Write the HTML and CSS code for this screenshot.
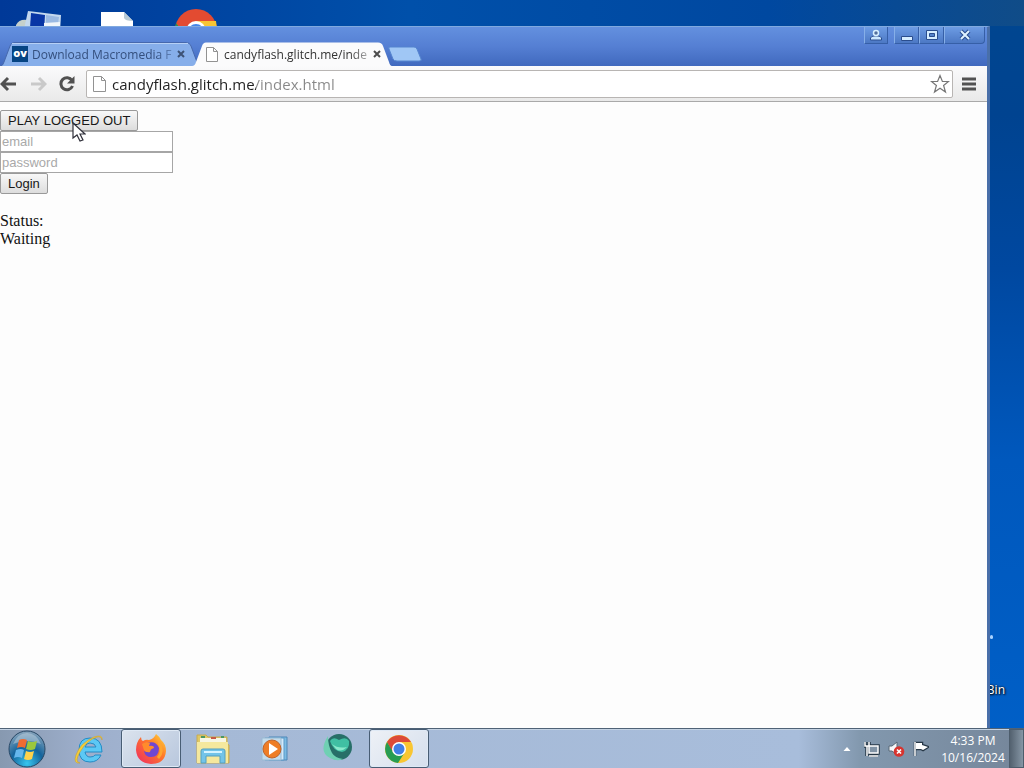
FILE: index.html
```html
<!DOCTYPE html>
<html lang="en">
<head>
<meta charset="utf-8">
<title>candyflash.glitch.me/index.html</title>
<link rel="stylesheet" href="styles.css">
</head>
<body>
<div class="desktop">
  <div class="shortcuts">
    <svg class="shortcut" width="48" height="36" viewBox="0 0 48 36" aria-hidden="true">
      <path d="M1 25q3-6 11-5l2 8H1z" fill="#c5d0cb"/>
      <path d="M13 11l33 4-1 18-36-4z" fill="#c3d8ee"/>
      <path d="M16 13l14 2-1 16-14-3z" fill="#0835a5"/>
      <path d="M31 15l13 2-1 7-12-1z" fill="#9ab9e2"/>
      <path d="M29 23l16-1v6l-16 1z" fill="#f0f5fa"/>
    </svg>
    <svg class="shortcut" width="34" height="36" viewBox="0 0 34 36" aria-hidden="true">
      <path d="M0 12h23l9 9v15H0z" fill="#fff"/><path d="M23 12v6q1 3 9 3z" fill="#b9cbd6"/>
    </svg>
    <svg class="shortcut" width="44" height="36" viewBox="0 0 44 36" aria-hidden="true">
      <circle cx="23" cy="30" r="21" fill="#e34b31"/><path d="M3 23l10 13H1z" fill="#24984f"/>
      <path d="M24 21h19l2 15H24z" fill="#f8c534"/><circle cx="23" cy="31" r="10" fill="#fff"/><circle cx="23" cy="32" r="8" fill="#4686e8"/>
    </svg>
  </div>
  <span class="bin-label">Recycle Bin</span>
  <span class="spark"></span>

  <section class="window">
    <header class="titlebar">
      <nav class="tabs">
        <div class="tab">
          <svg class="tab-shape" viewBox="0 0 200 24" preserveAspectRatio="none" aria-hidden="true"><path d="M0 24q3 0 4-4L10 4q1-3.500 4-3.500h172q4 0 5 3.500l6 16q1 4 3 4" fill="#86aeea" stroke="#4668ad"/><path d="M12 1.500h176" stroke="#b6d0f5"/></svg>
          <span class="favicon-ov">ov</span>
          <a class="tab-title" href="#">Download Macromedia F</a>
          <button class="tab-close" aria-label="Close tab"><svg width="8" height="8" viewBox="0 0 8 8"><path d="M1 1l6 6M7 1L1 7" stroke="#3d5276" stroke-width="2"/></svg></button>
        </div>
        <div class="tab active">
          <svg class="tab-shape" viewBox="0 0 200 24" preserveAspectRatio="none" aria-hidden="true"><path d="M0 24q3 0 4-4L10 4q1-3.500 4-3.500h172q4 0 5 3.500l6 16q1 4 3 4" fill="#fbfbfc"/></svg>
          <svg class="favicon" width="12" height="15" viewBox="0 0 12 15" aria-hidden="true"><path d="M.5.5h7l4 4v10H.5zM7.500.5v4h4" fill="#fff" stroke="#929292"/></svg>
          <a class="tab-title" href="#">candyflash.glitch.me/inde</a>
          <button class="tab-close" aria-label="Close tab"><svg width="8" height="8" viewBox="0 0 8 8"><path d="M1 1l6 6M7 1L1 7" stroke="#4c4c4c" stroke-width="2"/></svg></button>
        </div>
        <button class="new-tab" aria-label="New tab"><svg width="34" height="16" viewBox="0 0 34 16"><path d="M2 1h24q2 0 3 2l4 10q1 2-2 2H9q-3 0-4-2L1 3q-1-2 1-2z" fill="#a0c7f5" stroke="#5585cf"/></svg></button>
      </nav>
      <div class="controls">
        <button class="control user" aria-label="User"><svg width="12" height="12" viewBox="0 0 12 12"><path d="M.5 11v-2Q1.500 7 4 7h4q2.500 0 3.500 2v2z" fill="#cce8ff" stroke="#2a4d8d"/><circle cx="6" cy="4" r="2.500" fill="#536f9e" stroke="#d8f0ff" stroke-width="1.500"/></svg></button>
        <button class="control" aria-label="Minimize"><svg width="12" height="12" viewBox="0 0 12 12"><path d="M.5 7.500h11v4H.5z" fill="#d6edff" stroke="#2a4d8d"/></svg></button>
        <button class="control" aria-label="Maximize"><svg width="12" height="12" viewBox="0 0 12 12"><path d="M.5 1.500h11v9H.5z" fill="#d6edff" stroke="#2a4d8d"/><path d="M3.500 4.500h5v3h-5z" fill="#5584cb" stroke="#2a4d8d"/></svg></button>
        <button class="control close" aria-label="Close"><svg width="12" height="12" viewBox="0 0 12 12"><path d="M2 2l8 8M10 2l-8 8" stroke="#2a4d8d" stroke-width="4"/><path d="M2 2l8 8M10 2l-8 8" stroke="#e0f3ff" stroke-width="2"/></svg></button>
      </div>
    </header>

    <div class="toolbar">
      <button class="tool" aria-label="Back"><svg width="18" height="16" viewBox="0 0 18 16"><path d="M8 2L2 8l6 6M2 8h14" fill="none" stroke="#515151" stroke-width="3"/></svg></button>
      <button class="tool" aria-label="Forward"><svg width="18" height="16" viewBox="0 0 18 16"><path d="M10 2l6 6-6 6M16 8H2" fill="none" stroke="#c9c9c9" stroke-width="3"/></svg></button>
      <button class="tool" aria-label="Reload"><svg width="18" height="16" viewBox="0 0 18 16"><path d="M14 4.500A6 6 0 1 0 14.500 10" fill="none" stroke="#515151" stroke-width="3"/><path d="M16.500 0v7.500H9z" fill="#515151"/></svg></button>
      <div class="omnibox">
        <svg width="13" height="16" viewBox="0 0 13 16" aria-hidden="true"><path d="M.5.500h8l4 4v11H.5zM8.500.5v4h4" fill="#fff" stroke="#929292"/></svg>
        <input class="url" type="text" aria-label="Address" value="candyflash.glitch.me/index.html">
        <button class="star" aria-label="Bookmark this page"><svg width="20" height="20" viewBox="0 0 20 20"><path d="M10 1.500l2.400 6h6.100l-4.900 4 1.900 6.500-5.500-3.800L4.500 18l1.900-6.500-4.900-4h6.100z" fill="#fff" stroke="#777" stroke-width="1.200"/></svg></button>
      </div>
      <button class="menu" aria-label="Menu"><svg width="14" height="14" viewBox="0 0 14 14"><path d="M0 2h14M0 7h14M0 12h14" stroke="#525252" stroke-width="3"/></svg></button>
    </div>

    <main class="page">
      <form class="login">
        <button class="btn" type="button">PLAY LOGGED OUT</button>
        <input class="field" type="email" placeholder="email" aria-label="email">
        <input class="field" type="password" placeholder="password" aria-label="password">
        <button class="btn" type="button">Login</button>
      </form>
      <div class="status">Status:<br>Waiting</div>
    </main>
  </section>

  <footer class="taskbar">
    <button class="start" aria-label="Start"><svg width="38" height="38" viewBox="0 0 38 38">
      <defs><radialGradient id="orb" cx=".5" cy=".9" r=".9"><stop offset="0" stop-color="#37c6ef"/><stop offset=".5" stop-color="#14649c"/><stop offset="1" stop-color="#8ba6bd"/></radialGradient></defs>
      <circle cx="19" cy="19" r="18" fill="url(#orb)" stroke="#284866"/>
      <path d="M5 14Q10 3 19 3t14 11q-14-6-28 0z" fill="#c4d3df" opacity=".5"/>
      <path d="M11 10q4-2 8 0l-2 8q-4-2-8 0z" fill="#ee6b32"/><path d="M20 11q4 2 9 0l-2 8q-4 2-9 0z" fill="#9bc73d"/>
      <path d="M8 20q5-2 8 0l-2 8q-4-2-8 0z" fill="#65b7ed"/><path d="M18 21q4 2 8 0l-2 8q-4 2-8 0z" fill="#ffd24b"/>
    </svg></button>
    <div class="apps">
      <button class="app" aria-label="Internet Explorer"><svg width="32" height="32" viewBox="0 0 32 32"><path d="M29 19H12q1 5 5 5 4 0 5-2h6q-3 7-11 7Q6 29 6 17 6 5 17 5q12 0 12 14zM12 14h11q-1-4-6-4-4 0-5 4z" fill="#5cc8f4" stroke="#238bc5"/><path d="M29 7q1-6-8-3Q7 10 3 22q-3 9 4 8-6-1 0-11Q14 7 24 4q4-1 5 3z" fill="#f5ce38" stroke="#cda12f" stroke-width=".6"/></svg></button>
      <button class="app open" aria-label="Firefox"><svg width="32" height="32" viewBox="0 0 32 32"><defs><linearGradient id="fox" x1="1" y1="0" x2="0" y2="1"><stop stop-color="#ffe23e"/><stop offset=".4" stop-color="#ff7b27"/><stop offset="1" stop-color="#ef2865"/></linearGradient></defs><path d="M21 1q4 3 5 6 5 4 5 11-1 13-15 13Q2 30 1 17 1 9 6 4q0 3 2 4 3-2 6-1 5-1 7-6z" fill="url(#fox)"/><path d="M12 10q9-3 12 5 0 9-8 9-6 0-7-6 3 2 7-1-5-1-4-7z" fill="#7147d1"/><path d="M7 11q4-3 8-1l-1 3q5-1 5 2-4 1-4 4-4 1-6-2z" fill="#ff8b2c"/><path d="M24 9q5 10-1 16" fill="none" stroke="#ffa52e" stroke-width="3"/></svg></button>
      <button class="app" aria-label="File Explorer"><svg width="34" height="32" viewBox="0 0 34 32"><path d="M1 5V2h9l2 2h19v7l2 1v18H1z" fill="#dfc965" stroke="#c7aa52"/><path d="M4 5h26v4H4z" fill="#f7f6e4"/><path d="M5 4h4M25 4h3" stroke="#4a9862" stroke-width="2"/><path d="M15 5h5" stroke="#c75b45" stroke-width="2"/><path d="M1 9h31v21H1z" fill="#f5e89d"/><path d="M5 30V18q0-2 2-2h20q2 0 2 2v12h-5v-7H10v7z" fill="#72c4e9" stroke="#549fbe"/><path d="M8 19h18" stroke="#d6f4ff" stroke-width="2"/></svg></button>
      <button class="app" aria-label="Media Player"><svg width="28" height="28" viewBox="0 0 28 28"><path d="M8 2h18v23H8z" fill="#7cbbe2" stroke="#4f87b8"/><path d="M4 3h19v22H4z" fill="#d3eafa" stroke="#5a99c7"/><path d="M1 3h19v22H1z" fill="#c3dcec" stroke="#9abad3"/><circle cx="11" cy="14" r="9" fill="#ee7d25" stroke="#bd632b"/><path d="M8 8l9 6-9 6z" fill="#fff"/></svg></button>
      <button class="app" aria-label="Globe"><svg width="34" height="32" viewBox="0 0 34 32"><circle cx="19" cy="14" r="13" fill="#276f68"/><path d="M8 3Q-2 19 10 25q7 4 13 1-8-1-11-6Q8 13 8 3z" fill="#6fd0b3"/><path d="M10 8q3-5 9-1 7-4 10 1 1 9-7 11-9-1-12-11z" fill="#40bfa3"/><path d="M12 11q6 5 15 3-6 6-11 2z" fill="#8ae9cc"/></svg></button>
      <button class="app open current" aria-label="Chrome"><svg width="30" height="30" viewBox="0 0 30 30"><circle cx="15" cy="15" r="14" fill="#f9c632"/><path d="M3 8A14 14 0 0 1 27 8H15l-6 11z" fill="#dc4a38"/><path d="M3 8A14 14 0 0 0 14 29L21 18H9z" fill="#279c53"/><circle cx="15" cy="15" r="7" fill="#fff"/><circle cx="15" cy="15" r="5.500" fill="#417fe6"/></svg></button>
    </div>
    <div class="tray">
      <button class="tray-icon" aria-label="Show hidden icons"><svg width="8" height="6" viewBox="0 0 8 6"><path d="M4 1l3.500 4h-7z" fill="#fff"/></svg></button>
      <button class="tray-icon" aria-label="Network"><svg width="16" height="16" viewBox="0 0 16 16"><path d="M5 5h9v7H5zM5 15h9M1 1v4h4V1M3 5v10" fill="none" stroke="#263746" stroke-width="3.500"/><path d="M5 5h9v7H5z" fill="#8193a5"/><path d="M5 5h9v7H5zM5 15h9M1 1v4h4V1M3 5v10" fill="none" stroke="#fff" stroke-width="1.500"/></svg></button>
      <button class="tray-icon" aria-label="Volume muted"><svg width="17" height="16" viewBox="0 0 17 16"><path d="M1 5h3l5-4v13l-5-4H1z" fill="#f6f8fa" stroke="#596876"/><circle cx="11" cy="10.500" r="5.300" fill="#d7342f"/><path d="M9 8.500l4 4M13 8.500l-4 4" stroke="#fff" stroke-width="1.700"/></svg></button>
      <button class="tray-icon" aria-label="Action center"><svg width="16" height="16" viewBox="0 0 16 16"><path d="M2 1v14M3 2h6v2l6 2-5 3-2-1H3z" fill="#fff" stroke="#263746" stroke-width="2.500"/><path d="M2 1v14" stroke="#fff" stroke-width="1.500"/><path d="M3 2h6v2l6 2-5 3-2-1H3z" fill="#fff"/></svg></button>
      <time class="clock" datetime="2024-10-16T16:33">4:33 PM<br>10/16/2024</time>
      <button class="show-desktop" aria-label="Show desktop"></button>
    </div>
  </footer>

  <svg class="cursor" width="14" height="21" viewBox="0 0 14 21" aria-hidden="true"><path d="M1 1v15l4-3 3 6 3-1-3-6h5z" fill="#fff" stroke="#30303a" stroke-width="1.200"/></svg>
</div>
</body>
</html>
```
FILE: styles.css
```css
* { box-sizing: border-box; }
body { margin: 0; font-family: "Open Sans", "Noto Sans", sans-serif; }
button { padding: 0; border: 0; background: none; font: inherit; color: inherit; }
svg { display: block; flex: none; }

.desktop {
  position: relative;
  display: flex;
  flex-direction: column;
  min-height: 100vh;
  padding: 26px 34px 0 0;
  overflow: hidden;
  background: linear-gradient(#004690, #004390 15%, #0048a0 35%, #0058bd 60%, #0060c8);
}
.desktop::before {
  content: "";
  position: absolute;
  inset: 0 0 auto;
  height: 26px;
  background: linear-gradient(90deg, #003998, #0050aa 40%, #0048a0 75%, #104c88);
}
.shortcuts { position: absolute; top: 0; left: 15px; display: flex; gap: 38px; }
.bin-label {
  position: absolute;
  right: 19px;
  top: 682px;
  font-size: 12px;
  line-height: 16px;
  color: #fff;
  text-shadow: 1px 1px 2px #000, 0 0 2px #000;
}
.spark { position: absolute; right: 31px; top: 635px; width: 3px; height: 4px; border-radius: 2px; background: #a9d3ff; }

.window {
  position: relative;
  flex: 1;
  display: flex;
  flex-direction: column;
  border-right: 3px solid #496fa9;
  border-top: 1px solid #80a9df;
  background: #fdfdfd;
}
.titlebar {
  display: flex;
  justify-content: space-between;
  align-items: flex-start;
  height: 39px;
  background: linear-gradient(#6390df, #557fd3 50%, #4069be);
}
.tabs { display: flex; align-self: flex-end; align-items: center; }
.tab {
  position: relative;
  display: flex;
  align-items: center;
  width: 200px;
  height: 24px;
  padding: 0 15px 0 12px;
  gap: 4px;
  font-size: 12px;
  color: #344f7d;
}
.tab.active { z-index: 1; margin-left: -8px; padding-left: 14px; gap: 6px; color: #333; }
.tab-shape { position: absolute; inset: 0; width: 100%; height: 100%; }
.favicon-ov {
  position: relative;
  width: 16px;
  height: 16px;
  background: #064483;
  color: #fff;
  font-weight: 800;
  font-size: 11px;
  line-height: 14px;
  text-align: center;
}
.favicon { position: relative; }
.tab-title {
  position: relative;
  flex: 1;
  white-space: nowrap;
  color: inherit;
  text-decoration: none;
  mask-image: linear-gradient(90deg, #000 88%, #0006);
}
.tab-close { position: relative; }
.new-tab { margin-left: -4px; }
.controls { display: flex; height: 17px; padding-right: 2px; }
.control {
  display: grid;
  place-items: center;
  width: 25px;
  border: 1px solid #365fa7;
  border-top: 0;
  border-left-color: #86afe8;
  background: linear-gradient(#6d9ce4, #4c78c4);
}
.control.user { width: 24px; margin-right: 6px; }
.control.close { width: 41px; border-radius: 0 0 4px 0; }

.toolbar {
  display: flex;
  align-items: center;
  height: 36px;
  padding: 0 11px 0 0;
  gap: 11px;
  border-bottom: 1px solid #a9a9a9;
  background: linear-gradient(#fbfbfc, #e9e9e9);
}
.omnibox {
  flex: 1;
  display: flex;
  align-items: center;
  gap: 6px;
  height: 28px;
  min-width: 0;
  margin: 0 -2px 0 -1px;
  padding: 0 2px 0 6px;
  border: 1px solid #b8b5b3;
  border-radius: 2px;
  background: #fff;
}
.url {
  flex: 1;
  min-width: 0;
  height: 24px;
  padding: 0;
  border: 0;
  font: 15px "Open Sans", "Noto Sans", sans-serif;
  color: transparent;
  background: linear-gradient(90deg, #202020 144px, #888 144px) text;
}

.page { flex: 1; padding: 8px 0; font: 16px/18px "Liberation Serif", serif; color: #111; }
.login { display: flex; flex-direction: column; align-items: flex-start; }
.btn, .field { height: 21px; font: 13px "Liberation Sans", sans-serif; }
.btn {
  padding: 0 7px;
  border: 1px solid #999;
  border-radius: 2px;
  background: linear-gradient(#f8f8f8, #ddd);
  color: #181818;
}
.field { width: 173px; padding: 1px; border: 1px solid #a6a6a6; background: #fff; }
.field::placeholder { color: #a9a9a9; }
.status { margin-top: 18px; }

.taskbar {
  display: flex;
  align-items: stretch;
  position: relative;
  height: 40px;
  margin-right: -34px;
  border-top: 1px solid #4f6276;
  box-shadow: inset 0 1px #c4d3e4;
  background: linear-gradient(90deg, #8799b0, #9daecb 8%, #a5b9d6 20%, #a8bddb 78%, #8298ae 84%, #75869a);
}
.start { padding-left: 8px; }
.apps { display: flex; padding-left: 13px; gap: 2px; }
.app { display: grid; place-items: center; width: 60px; }
.app.open {
  border: 1px solid #485d74;
  border-radius: 3px;
  background: linear-gradient(135deg, #dbe3ee, #b8c7dd);
  box-shadow: inset 0 0 0 1px #dfe9f5;
}
.app.current { background: linear-gradient(135deg, #eef1f6, #d5dfed); }
.tray { display: flex; align-items: center; margin-left: auto; gap: 8px; }
.tray-icon:first-child { margin-right: 5px; }
.clock {
  width: 72px;
  margin-right: -7px;
  font-size: 12px;
  line-height: 17px;
  text-align: center;
  color: #fff;
  white-space: nowrap;
}
.show-desktop {
  align-self: stretch;
  width: 15px;
  margin-left: -1px;
  border: 1px solid #4d5d6c;
  background: linear-gradient(90deg, #53616f, #8696a5);
}
.cursor { position: absolute; left: 72px; top: 122px; }
```
